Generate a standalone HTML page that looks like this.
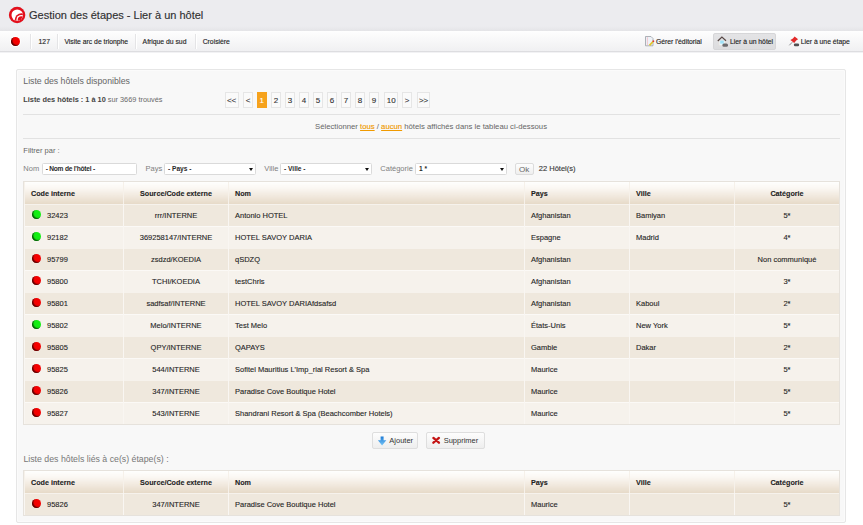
<!DOCTYPE html>
<html><head><meta charset="utf-8">
<style>
*{box-sizing:border-box;margin:0;padding:0}
html,body{width:863px;height:525px;overflow:hidden;background:#fff;font-family:"Liberation Sans",sans-serif;color:#333}
.a{position:absolute;white-space:nowrap}
#hdr{position:absolute;left:0;top:0;width:863px;height:31px;background:linear-gradient(#ececef 85%,#e4e4e7)}
#tb{position:absolute;left:0;top:31px;width:863px;height:21px;background:linear-gradient(#fefefe,#f0f0f2);border-bottom:1px solid #dddde0;box-shadow:0 1px 0 #f2f2f4}
.sep{position:absolute;top:34px;width:1px;height:15px;background:#e4e4e6;box-shadow:1px 0 0 #fff}
.tbt{position:absolute;top:37px;font-size:6.8px;line-height:9px;color:#222;-webkit-text-stroke:0.15px #333;white-space:nowrap}
#panel{position:absolute;left:16px;top:69px;width:830px;height:454px;background:#f8f8f8;border:1px solid #e6e6e6;border-radius:2px;box-shadow:inset 0 0 0 1px #fbfbfb}
.pg{position:absolute;top:92px;height:16px;border:1px solid #e6e6e6;background:#fafafa;font-size:8px;line-height:16px;-webkit-text-stroke:0.12px #333;text-align:center;color:#333}
.pg.on{background:#f6a21c;border-color:#f6a21c;color:#fff;-webkit-text-stroke:0.1px #fff}
.hr{position:absolute;left:23px;width:817px;height:1px;background:#e2e2e2}
.lbl{position:absolute;top:164px;font-size:7.5px;line-height:10px;color:#808080;white-space:nowrap}
.inp{position:absolute;top:163px;height:12px;background:#fff;border:1px solid #dadada;border-radius:1.5px;font-size:6.1px;line-height:10px;font-weight:bold;color:#2a2a2a;padding-left:3px;white-space:nowrap}
.arr{position:absolute;right:2px;top:4px;width:0;height:0;border-left:2.5px solid transparent;border-right:2.5px solid transparent;border-top:3px solid #111}
table{position:absolute;border-collapse:collapse;table-layout:fixed}
.tw{position:absolute;left:23px;width:816.5px;border:1px solid #e6e2dc;background:#fff}
td,th{font-size:7.5px;line-height:10px;white-space:nowrap;overflow:hidden;padding:0 0 0 6px;border:0;border-left:1px solid #f9f6f2}
th{height:22px;padding-top:1px;font-weight:bold;font-size:7.2px;text-align:left;color:#222;-webkit-text-stroke:0.1px #222;background:linear-gradient(#fefefd 0%,#fbf8f4 25%,#efe6da 70%,#e6dac8 100%);border-left:1px solid #f6f1ea}
td{height:22px;color:#1e1e1e;-webkit-text-stroke:0.12px #333;padding-top:1px}
tr.o td{background:#efe8dd;box-shadow:inset 0 1px 0 rgba(255,255,255,.45)}
tr.e td{background:#f6f2ec;box-shadow:inset 0 1px 0 rgba(255,255,255,.5)}
.c{text-align:center;padding-left:0}
.dot{display:inline-block;width:9px;height:9px;border-radius:50%;vertical-align:middle;margin:0 6px 0 1px;position:relative;top:-1px}
.g{background:#12ee12;box-shadow:inset 1.3px -1px 1px rgba(0,40,0,.75)}
.r{background:#f40000;box-shadow:inset 1.3px -1px 1px rgba(40,0,0,.75)}
.btn{position:absolute;height:17px;border:1px solid #dedede;border-radius:2px;background:linear-gradient(#fdfdfd,#eeeeee);font-size:7.5px;line-height:15px;color:#333;white-space:nowrap}
</style></head><body>
<div id="hdr"></div>
<!-- logo -->
<svg class="a" style="left:5px;top:4px" width="24" height="24" viewBox="0 0 24 24">
<defs><clipPath id="cw"><circle cx="12.2" cy="11.1" r="5.7"/></clipPath></defs>
<circle cx="12.1" cy="11" r="9" fill="#dff2f4" opacity="0.6"/>
<circle cx="12.1" cy="11" r="8.2" fill="#e3101c"/>
<circle cx="12.2" cy="11.1" r="5.7" fill="#fff"/>
<g clip-path="url(#cw)">
<circle cx="16.4" cy="15.9" r="6.7" fill="#e3101c"/>
<circle cx="16.4" cy="15.9" r="5.0" fill="#fff"/>
<circle cx="16.4" cy="15.9" r="3.7" fill="#e3101c"/>
</g>
</svg>
<div class="a" style="left:29px;top:8px;font-size:11px;line-height:14px;color:#2e2e30;-webkit-text-stroke:0.15px #3a3a3a">Gestion des étapes - Lier à un hôtel</div>

<div id="tb"></div>
<div class="a" style="left:11px;top:37px;width:9px;height:9px;border-radius:50%;background:#f40000;box-shadow:inset 1.3px -1px 1px rgba(40,0,0,.75),0 0 1px 1px #fff"></div>
<div class="sep" style="left:30px"></div>
<div class="tbt" style="left:38.6px">127</div>
<div class="sep" style="left:57px"></div>
<div class="tbt" style="left:64.4px">Visite arc de trionphe</div>
<div class="sep" style="left:135px"></div>
<div class="tbt" style="left:142.6px">Afrique du sud</div>
<div class="sep" style="left:195px"></div>
<div class="tbt" style="left:202.7px">Croisière</div>

<!-- right toolbar -->
<svg class="a" style="left:644px;top:35px" width="11" height="12" viewBox="0 0 11 12">
<path d="M1.5 1.5 H7 L9 3.5 V10.8 H1.5 Z" fill="#eef2f8" stroke="#9aa0a6" stroke-width="0.8"/>
<path d="M3.4 2.2 V10.3" stroke="#f2b4bc" stroke-width="0.7"/>
<path d="M5.5 10.4 L9.1 6.5" stroke="#e2c62a" stroke-width="1.8"/>
<circle cx="9.4" cy="6.2" r="0.9" fill="#e03434"/>
</svg>
<div class="tbt" style="left:656px">Gérer l'éditorial</div>
<div class="a" style="left:713px;top:33px;width:63px;height:16.5px;border:1px solid #d6d6d8;border-radius:2px;background:linear-gradient(#e4e4e6,#dcdcde)"></div>
<svg class="a" style="left:716px;top:35px" width="13" height="13" viewBox="0 0 13 13">
<path d="M3 5.8 V10.5 H9 V5.8" fill="#e8f6fb" stroke="#e8e0da" stroke-width="0.8"/>
<rect x="4.2" y="5.6" width="3.6" height="3" fill="#9ee0f6"/>
<path d="M1.8 6 L5.9 2 L10 5.8" fill="none" stroke="#574846" stroke-width="1.2"/>
<rect x="6.4" y="8.4" width="5.6" height="3.3" rx="1.5" fill="#6b6b6e"/>
</svg>
<div class="tbt" style="left:730px">Lier à un hôtel</div>
<svg class="a" style="left:788px;top:35px" width="13" height="13" viewBox="0 0 13 13">
<path d="M1.3 10.3 L4.3 7.2" stroke="#808080" stroke-width="0.9"/>
<path d="M6.6 1.6 L10.1 4.3 L8.2 5.4 L6.2 8 L2.4 5 L4.9 3.6 Z" fill="#e22a2a"/>
<rect x="5.9" y="8.4" width="5.2" height="2.9" rx="1.2" fill="#505052"/>
</svg>
<div class="tbt" style="left:800.7px">Lier à une étape</div>

<div id="panel"></div>
<div class="a" style="left:23.3px;top:75px;font-size:8.72px;line-height:12px;color:#666">Liste des hôtels disponibles</div>
<div class="a" style="left:23.3px;top:95px;font-size:7.35px;line-height:10px;color:#6a6a6a"><b style="color:#444">Liste des hôtels : 1 à 10</b> sur 3669 trouvés</div>

<div class="pg" style="left:224.6px;width:14px">&lt;&lt;</div>
<div class="pg" style="left:243px;width:10px">&lt;</div>
<div class="pg on" style="left:257px;width:9.5px">1</div>
<div class="pg" style="left:271px;width:10px">2</div>
<div class="pg" style="left:285px;width:10px">3</div>
<div class="pg" style="left:299px;width:10px">4</div>
<div class="pg" style="left:313px;width:10px">5</div>
<div class="pg" style="left:327px;width:10px">6</div>
<div class="pg" style="left:341px;width:10px">7</div>
<div class="pg" style="left:355px;width:10px">8</div>
<div class="pg" style="left:369px;width:10px">9</div>
<div class="pg" style="left:384.4px;width:13.5px">10</div>
<div class="pg" style="left:402.3px;width:9.5px">&gt;</div>
<div class="pg" style="left:416.8px;width:13.5px">&gt;&gt;</div>

<div class="hr" style="top:114px"></div>
<div class="a" style="left:315px;top:122px;font-size:7.72px;line-height:10px;color:#666">Sélectionner <u style="color:#f09a00;-webkit-text-stroke:0.15px #f09a00">tous</u> / <u style="color:#f09a00;-webkit-text-stroke:0.15px #f09a00">aucun</u> hôtels affichés dans le tableau ci-dessous</div>
<div class="hr" style="top:138px"></div>

<div class="lbl" style="left:23.3px;top:146px;color:#666">Filtrer par :</div>
<div class="lbl" style="left:23.3px">Nom</div>
<div class="inp" style="left:41.7px;width:95.8px;font-size:6.6px;letter-spacing:-0.22px">- Nom de l'hôtel -</div>
<div class="lbl" style="left:145.6px">Pays</div>
<div class="inp" style="left:164px;width:91.5px;font-size:6.6px">- Pays -<span class="arr"></span></div>
<div class="lbl" style="left:264.3px">Ville</div>
<div class="inp" style="left:280px;width:92px;font-size:6.6px">- Ville -<span class="arr"></span></div>
<div class="lbl" style="left:380.3px">Catégorie</div>
<div class="inp" style="left:415px;width:92px;font-size:6.6px">1 *<span class="arr"></span></div>
<div class="btn" style="left:514.6px;top:162.5px;width:19px;height:12.5px;line-height:11px;font-size:8px;text-align:center;color:#666;border-color:#dcdcdc">Ok</div>
<div class="lbl" style="left:538.8px;color:#3a3a3a;-webkit-text-stroke:0.15px #444">22 Hôtel(s)</div>

<div class="tw" style="top:181px;height:244px">
<table style="left:0;top:0;width:814.5px">
<colgroup><col style="width:99px"><col style="width:105px"><col style="width:296px"><col style="width:105px"><col style="width:105px"><col style="width:104.5px"></colgroup>
<tr><th>Code interne</th><th class="c">Source/Code externe</th><th>Nom</th><th>Pays</th><th>Ville</th><th class="c">Catégorie</th></tr>
<tr class="o"><td><span class="dot g"></span>32423</td><td class="c">rrr/INTERNE</td><td>Antonio HOTEL</td><td>Afghanistan</td><td>Bamiyan</td><td class="c">5*</td></tr>
<tr class="e"><td><span class="dot g"></span>92182</td><td class="c">369258147/INTERNE</td><td>HOTEL SAVOY DARIA</td><td>Espagne</td><td>Madrid</td><td class="c">4*</td></tr>
<tr class="o"><td><span class="dot r"></span>95799</td><td class="c">zsdzd/KOEDIA</td><td>qSDZQ</td><td>Afghanistan</td><td></td><td class="c">Non communiqué</td></tr>
<tr class="e"><td><span class="dot r"></span>95800</td><td class="c">TCHI/KOEDIA</td><td>testChris</td><td>Afghanistan</td><td></td><td class="c">3*</td></tr>
<tr class="o"><td><span class="dot r"></span>95801</td><td class="c">sadfsaf/INTERNE</td><td>HOTEL SAVOY DARIAfdsafsd</td><td>Afghanistan</td><td>Kaboul</td><td class="c">2*</td></tr>
<tr class="e"><td><span class="dot g"></span>95802</td><td class="c">Melo/INTERNE</td><td>Test Melo</td><td>États-Unis</td><td>New York</td><td class="c">5*</td></tr>
<tr class="o"><td><span class="dot r"></span>95805</td><td class="c">QPY/INTERNE</td><td>QAPAYS</td><td>Gambie</td><td>Dakar</td><td class="c">2*</td></tr>
<tr class="e"><td><span class="dot r"></span>95825</td><td class="c">544/INTERNE</td><td>Sofitel Mauritius L'Imp_rial Resort &amp; Spa</td><td>Maurice</td><td></td><td class="c">5*</td></tr>
<tr class="o"><td><span class="dot r"></span>95826</td><td class="c">347/INTERNE</td><td>Paradise Cove Boutique Hotel</td><td>Maurice</td><td></td><td class="c">5*</td></tr>
<tr class="e"><td><span class="dot r"></span>95827</td><td class="c">543/INTERNE</td><td>Shandrani Resort &amp; Spa (Beachcomber Hotels)</td><td>Maurice</td><td></td><td class="c">5*</td></tr>
</table>
</div>

<div class="btn" style="left:372px;top:432px;width:46px">
<svg class="a" style="left:4px;top:2px" width="10" height="12" viewBox="0 0 10 12"><defs><linearGradient id="ab" x1="0" y1="0" x2="0" y2="1"><stop offset="0" stop-color="#1b7ad6"/><stop offset="1" stop-color="#78c6f6"/></linearGradient></defs><path d="M3.6 1.4 H6.6 V5.2 H9.3 L5.1 10.5 L0.9 5.2 H3.6 Z" fill="url(#ab)"/></svg>
<span class="a" style="left:16.3px;top:0">Ajouter</span></div>
<div class="btn" style="left:425.7px;top:432px;width:59px">
<svg class="a" style="left:5px;top:3px" width="9" height="9" viewBox="0 0 9 9"><path d="M1.4 1.9 L6.9 6.7 M6.9 1.9 L1.4 6.7" stroke="#c41414" stroke-width="2.3" stroke-linecap="round"/></svg>
<span class="a" style="left:17px;top:0">Supprimer</span></div>

<div class="a" style="left:23.4px;top:454px;font-size:8.77px;line-height:11px;color:#777">Liste des hôtels liés à ce(s) étape(s) :</div>

<div class="tw" style="top:470px;height:46px">
<table style="left:0;top:0;width:814.5px">
<colgroup><col style="width:99px"><col style="width:105px"><col style="width:296px"><col style="width:105px"><col style="width:105px"><col style="width:104.5px"></colgroup>
<tr><th>Code interne</th><th class="c">Source/Code externe</th><th>Nom</th><th>Pays</th><th>Ville</th><th class="c">Catégorie</th></tr>
<tr class="o"><td><span class="dot r"></span>95826</td><td class="c">347/INTERNE</td><td>Paradise Cove Boutique Hotel</td><td>Maurice</td><td></td><td class="c">5*</td></tr>
</table>
</div>
</body></html>
